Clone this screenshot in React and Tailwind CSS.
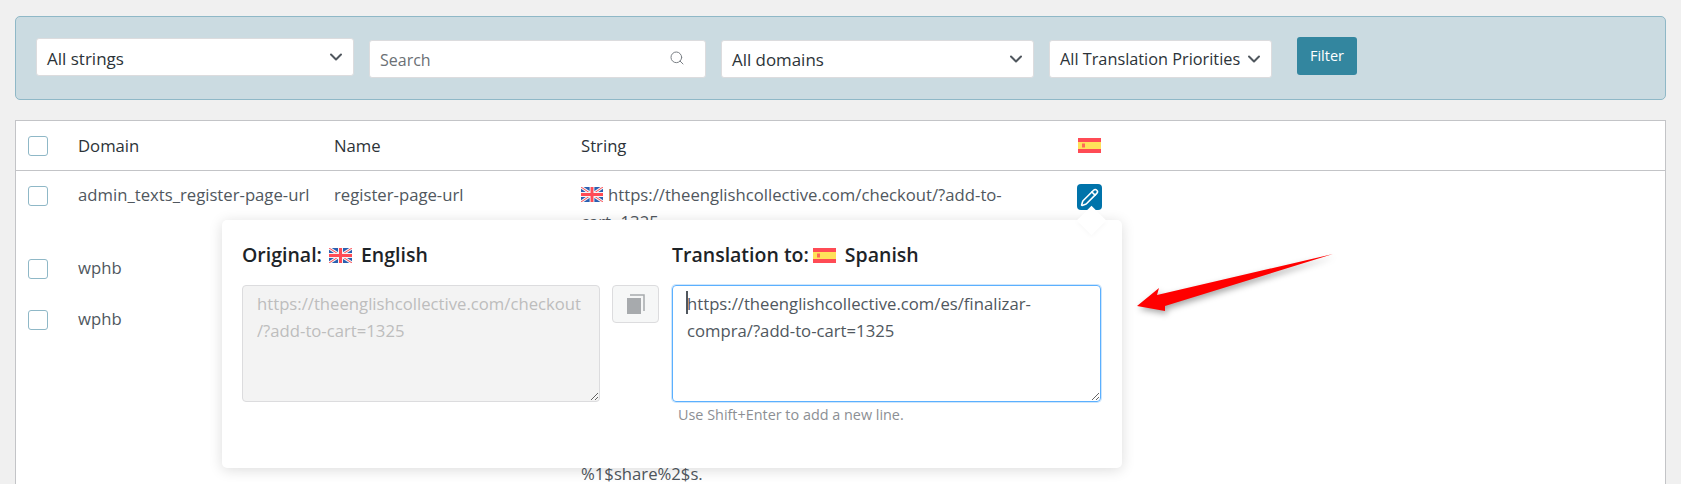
import React from 'react';
import { Search, Pencil, ChevronDown } from 'lucide-react';

const font = "font-['Open_Sans','Noto_Sans',sans-serif]";

const FlagES = ({ className }) => (
  <svg viewBox="0 0 23 15" className={className} preserveAspectRatio="none">
    <rect width="23" height="15" fill="#ff4b55" />
    <rect y="4" width="23" height="7" fill="#ffe15a" />
    <rect x="4" y="5.5" width="3" height="4" fill="#ff4b55" opacity="0.8" />
  </svg>
);

const FlagUK = ({ className }) => (
  <svg viewBox="0 0 23 15" className={className} preserveAspectRatio="none">
    <rect width="23" height="15" fill="#2a5fb0" />
    <path d="M0 0L23 15M23 0L0 15" stroke="#f5f5f5" strokeWidth="3" />
    <path d="M0 0L23 15M23 0L0 15" stroke="#ff4b55" strokeWidth="1" />
    <path d="M11.5 0V15M0 7.5H23" stroke="#f5f5f5" strokeWidth="5" />
    <path d="M11.5 0V15M0 7.5H23" stroke="#ff4b55" strokeWidth="3" />
  </svg>
);

const Select = ({ label, textClass, className }) => (
  <div className={`flex h-[38px] items-center justify-between rounded-[3px] border border-[#dcdcde] bg-white pl-[10px] pr-[7px] text-[#2c3338] ${className}`}>
    <span className={`whitespace-nowrap ${textClass}`}>{label}</span>
    <ChevronDown size={20} strokeWidth={2.4} className="text-[#50575e] shrink-0" />
  </div>
);

const Checkbox = () => (
  <span className="block h-5 w-5 rounded-[3px] border border-[#8fb8c7] bg-white" />
);

const Row = ({ domain, name, children }) => (
  <div className="flex items-start pl-[12px] text-[16.7px] leading-[27px] text-[#50575e]">
    <div className="w-[50px] pt-[5px]"><Checkbox /></div>
    <div className="w-[256px]">{domain}</div>
    <div className="w-[247px]">{name}</div>
    <div className="w-[430px]">{children}</div>
  </div>
);

export default function App() {
  return (
    <div className={`relative h-[484px] overflow-hidden bg-[#f0f0f0] px-[15px] pt-4 ${font}`}>
      {/* filtros */}
      <div className="flex h-[84px] items-start rounded-[5px] border border-[#8fb8c7] bg-[#cbdbe1] pl-[20px]">
        <Select label="All strings" textClass="pt-[3px] text-[17px]" className="mt-[21px] w-[318px]" />
        <div className="ml-[15px] mt-[23px] flex h-[38px] w-[337px] items-center justify-between rounded-[3px] border border-[#dcdcde] bg-white pl-[10px] pr-[20px]">
          <span className="pt-[1px] text-[16px] text-[#6b7075]">Search</span>
          <Search size={16} strokeWidth={1.5} className="-mt-[2px] text-[#7a7f85]" />
        </div>
        <Select label="All domains" textClass="pt-[1px] text-[16.9px]" className="ml-[15px] mt-[23px] w-[313px]" />
        <Select label="All Translation Priorities" textClass="pt-[1px] text-[16.3px]" className="ml-[15px] mt-[23px] w-[223px]" />
        <button className="ml-[25px] mt-[20px] h-[38px] w-[60px] rounded-[3px] bg-[#33869f] text-[14.5px] font-medium text-white">Filter</button>
      </div>

      {/* tabela */}
      <div className="mt-[20px] h-[500px] border border-[#c3c4c7] bg-white">
        <div className="flex h-[50px] items-center border-b border-[#c3c4c7] pl-[12px] text-[16.7px] text-[#2c3338]">
          <div className="w-[50px]"><Checkbox /></div>
          <div className="w-[256px]">Domain</div>
          <div className="w-[247px]">Name</div>
          <div className="w-[497px]">String</div>
          <FlagES className="h-[15px] w-[23px]" />
        </div>

        <div className="relative h-[83px] pt-[10px]">
          <Row domain="admin_texts_register-page-url" name="register-page-url">
            <FlagUK className="mr-[5px] inline-block h-[15px] w-[22px] align-[-1px]" />
            https://theenglishcollective.com/checkout/?add-to-cart=1325
          </Row>
          <button className="absolute left-[1061px] top-[13px] flex h-[26px] w-[25px] items-center justify-center rounded-[4px] bg-[#0073aa] text-white">
            <Pencil size={19} strokeWidth={2} />
          </button>
        </div>
        <div className="h-[51px]"><Row domain="wphb" name="" /></div>
        <div className="h-[155px]"><Row domain="wphb" name="" /></div>
        <div className="pl-[565px] text-[16.7px] leading-[27px] text-[#50575e]">%1$share%2$s.</div>
      </div>

      {/* popover de tradução */}
      <div className="absolute left-[222px] top-[220px] h-[248px] w-[900px] rounded-[5px] bg-white pl-5 pt-5 shadow-[0_2px_14px_rgba(0,0,0,0.14)]">
        <div className="absolute left-[859px] top-[-10px] h-[21px] w-[21px] rotate-45 bg-white shadow-[1px_1px_5px_rgba(0,0,0,0.03)]" />
        <div className="relative flex">
          <div className="w-[358px]">
            <div className="flex h-[30px] items-center text-[19.5px] font-semibold text-[#1d2327]">
              Original:
              <FlagUK className="ml-[7px] mr-[9px] h-[15px] w-[23px]" />
              English
            </div>
            <textarea
              disabled
              defaultValue={"https://theenglishcollective.com/checkout\n/?add-to-cart=1325"}
              className="mt-[15px] block h-[117px] w-[358px] rounded-[4px] border border-[#dcdcde] bg-[#f3f3f3] px-[14px] py-[4px] text-[16.7px] leading-[27px] text-[#bdbdbd] outline-none"
            />
          </div>
          <div className="ml-3 mt-[45px]">
            <button className="flex h-[38px] w-[47px] items-center justify-center rounded-[4px] border border-[#dcdcde] bg-[#f6f7f7]">
              <svg width="18" height="20" viewBox="0 0 18 20">
                <rect x="0" y="4" width="14" height="16" fill="#a7aaad" />
                <path d="M3 1H17V17" fill="none" stroke="#a7aaad" strokeWidth="1.5" />
              </svg>
            </button>
          </div>
          <div className="ml-[13px] w-[429px]">
            <div className="flex h-[30px] items-center text-[19.5px] font-semibold text-[#1d2327]">
              Translation to:
              <FlagES className="ml-[4px] mr-[9px] h-[15px] w-[23px]" />
              Spanish
            </div>
            <div className="relative mt-[15px]">
              <textarea
                defaultValue={"https://theenglishcollective.com/es/finalizar-\ncompra/?add-to-cart=1325"}
                className="block h-[117px] w-[429px] rounded-[4px] border border-[#5bb0ff] px-[14px] py-[4px] text-[16.7px] leading-[27px] text-[#50575e] outline-none shadow-[0_0_0_1px_#cfe6fb]"
              />
              <span className="absolute left-[14px] top-[6px] h-[23px] w-[2px] bg-[#50575e]" />
            </div>
            <div className="ml-[6px] mt-[3px] text-[14.4px] leading-5 text-[#8c8f94]">Use Shift+Enter to add a new line.</div>
          </div>
        </div>
      </div>

      {/* seta vermelha */}
      <svg className="absolute left-[1130px] top-[245px] h-[80px] w-[215px] drop-shadow-[2px_3px_3px_rgba(0,0,0,0.35)]" viewBox="1130 245 215 80">
        <polygon points="1137,306 1159,288 1157,295 1333,254 1165,306 1165,311" fill="#ff0000" />
      </svg>
    </div>
  );
}
